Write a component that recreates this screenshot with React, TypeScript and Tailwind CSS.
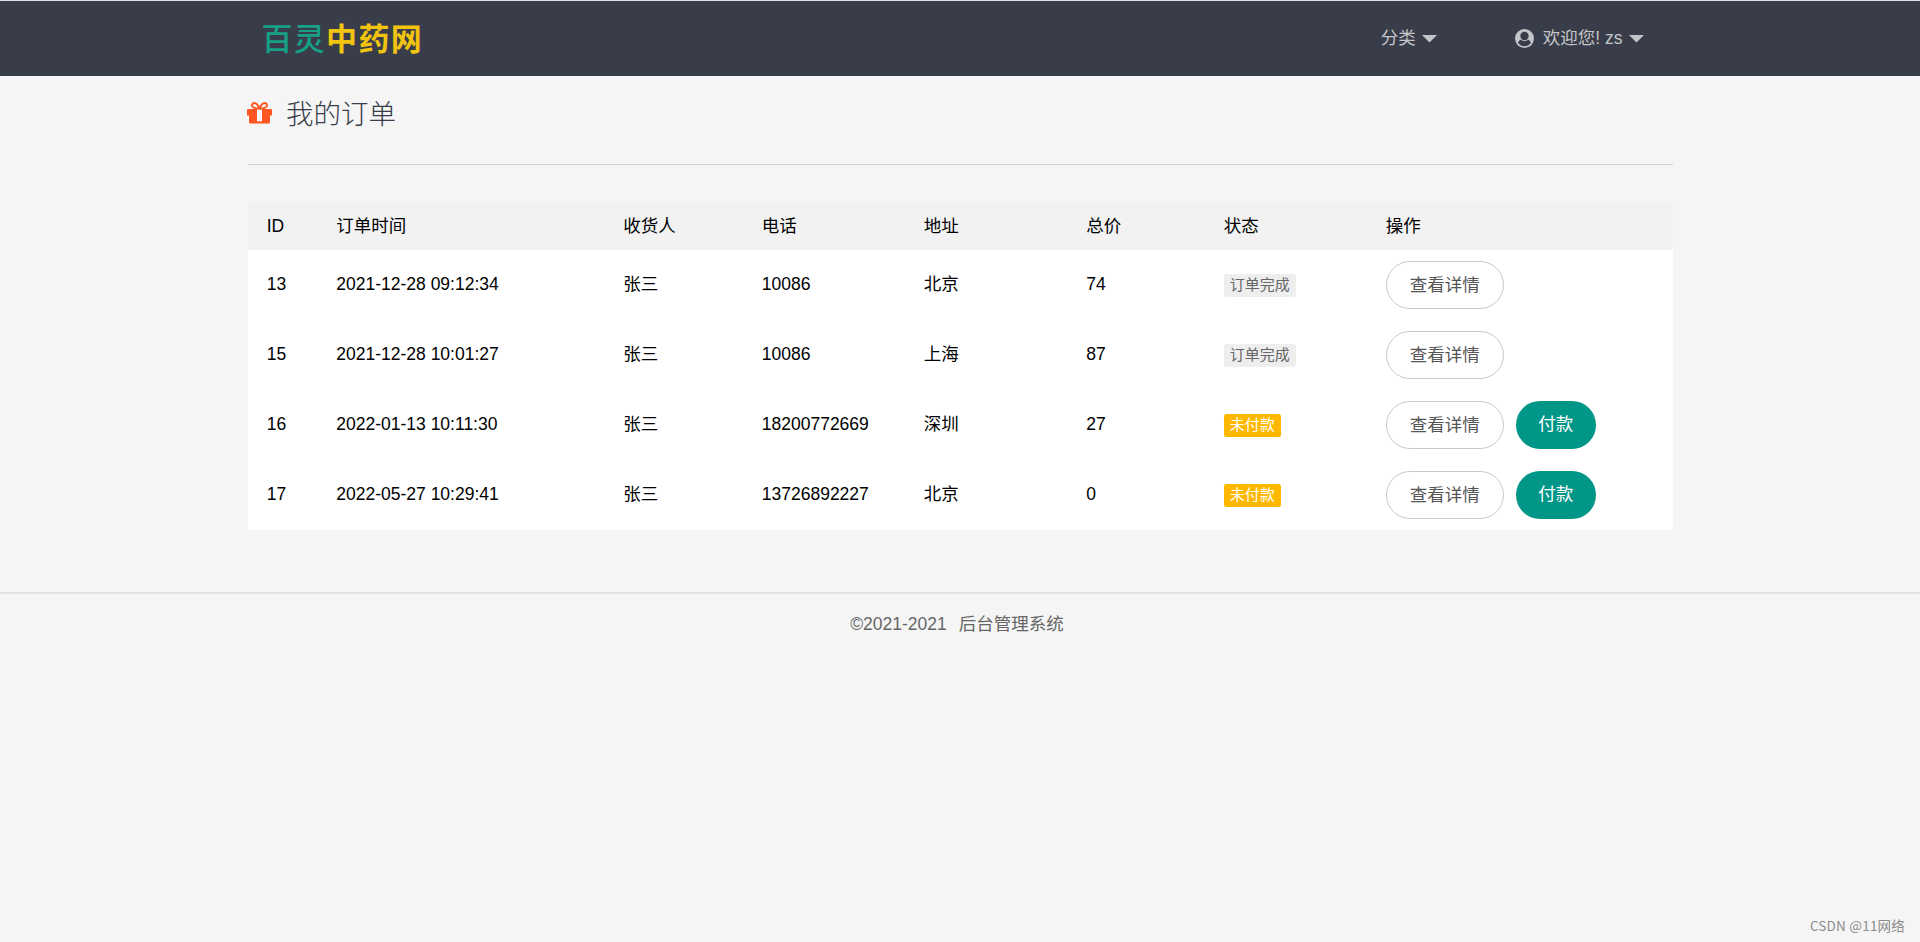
import { FC } from 'react';

type Order = {
    id: number;
    time: string;
    name: string;
    phone: string;
    address: string;
    total: number;
    paid: boolean;
};

const orders: Order[] = [
    { id: 13, time: '2021-12-28 09:12:34', name: '张三', phone: '10086', address: '北京', total: 74, paid: true },
    { id: 15, time: '2021-12-28 10:01:27', name: '张三', phone: '10086', address: '上海', total: 87, paid: true },
    { id: 16, time: '2022-01-13 10:11:30', name: '张三', phone: '18200772669', address: '深圳', total: 27, paid: false },
    { id: 17, time: '2022-05-27 10:29:41', name: '张三', phone: '13726892227', address: '北京', total: 0, paid: false },
];

const columns = ['ID', '订单时间', '收货人', '电话', '地址', '总价', '状态', '操作'];

const rowGrid =
    'grid grid-cols-[69.5px_287px_138.5px_162px_162.5px_137.5px_162px_1fr] pl-[18.75px]';

const Caret: FC = () => (
    <svg className="w-[15px] h-[8px] ml-[6px] mt-[3px]" viewBox="0 0 15 8" fill="currentColor">
        <path d="M0 0h15L7.5 7.5z" />
    </svg>
);

const UserIcon: FC = () => (
    <svg className="w-[19px] h-[19px] mr-[9px] mt-px" viewBox="0 0 19 19">
        <circle cx="9.5" cy="9.5" r="9.5" fill="currentColor" />
        <circle cx="9.5" cy="7" r="4.2" fill="#393d49" />
        <path d="M3 13.800C3.800 12 5 11 6 10.600c1.800 2.200 5.200 2.200 7 0 1 .4 2.200 1.400 3 3.200C14.300 16.200 12 17.300 9.500 17.300S4.700 16.200 3 13.800z" fill="#393d49" />
    </svg>
);

const GiftIcon: FC = () => (
    <svg className="w-[25px] h-[22px]" viewBox="0 0 25 22">
        <path d="M1 7h23q1 0 1 1v5q0 .6-.6.6H23V20q0 1.500-1.500 1.500h-18Q2 21.500 2 20v-6.400H.6Q0 13.600 0 13V8q0-1 1-1z" fill="#ff5722" />
        <path d="M10 7.300h5v12h-5z" fill="#f9f9f9" />
        <path
            d="M12.500 6.800C11 3 9.200 1 7.300 1 5.700 1 4.800 2.200 5 3.700c.3 1.800 2 2.900 7.500 3.100zM12.500 6.800C14 3 15.800 1 17.700 1c1.600 0 2.500 1.200 2.300 2.700-.3 1.800-2 2.900-7.500 3.100z"
            fill="none"
            stroke="#ff5722"
            strokeWidth="1.900"
        />
    </svg>
);

const Header: FC = () => (
    <header className="h-[76px] border-t border-[#dfe1e2] bg-[#393d49] text-[#c4c5c8]">
        <div className="w-[1425px] mx-auto h-full flex items-center">
            <div className="pl-[14px] text-[31px] leading-none tracking-[1.300px] pt-px">
                <span className="text-[#16a085] font-medium">百灵</span>
                <span className="text-[#f1c40f] font-bold">中药网</span>
            </div>
            <nav className="ml-auto mr-[29px] -mt-[2px] flex items-center">
                <a className="flex items-center mr-[78px]">
                    分类
                    <Caret />
                </a>
                <a className="flex items-center whitespace-pre">
                    <UserIcon />
                    欢迎您! zs
                    <Caret />
                </a>
            </nav>
        </div>
    </header>
);

const StatusBadge: FC<{ paid: boolean }> = ({ paid }) =>
    paid ? (
        <span className="inline-block h-[23px] px-[6px] rounded-[2.500px] bg-[#eee] text-[#666] text-[15px] leading-[21px]">
            订单完成
        </span>
    ) : (
        <span className="inline-block h-[23px] px-[6px] rounded-[2.500px] bg-[#ffb800] text-white text-[15px] leading-[21px]">
            未付款
        </span>
    );

const OrderRow: FC<{ order: Order }> = ({ order }) => (
    <div className={`${rowGrid} h-[70px] bg-white leading-[69px]`}>
        <span>{order.id}</span>
        <span>{order.time}</span>
        <span>{order.name}</span>
        <span>{order.phone}</span>
        <span>{order.address}</span>
        <span>{order.total}</span>
        <div className="pt-6 flex items-start">
            <StatusBadge paid={order.paid} />
        </div>
        <div className="pt-[11px] flex items-start gap-3">
            <button className="w-[118px] h-12 rounded-[24px] border border-[#c9c9c9] bg-white text-[#555] leading-[45px]">
                查看详情
            </button>
            {!order.paid && (
                <button className="w-20 h-12 pb-[2px] rounded-[24px] bg-[#009688] text-white leading-[45px]">付款</button>
            )}
        </div>
    </div>
);

export default function App() {
    return (
        <div className="min-h-screen flex flex-col bg-[#f5f5f5] text-black text-[17.5px] leading-6 font-['Liberation_Sans','Noto_Sans_CJK_SC',sans-serif]">
            <Header />
            <main className="w-[1425px] ml-[248px]">
                <div className="h-[89px] border-b border-[#d2d2d2] flex items-start pt-[18px]">
                    <div className="pt-[8px] -ml-px">
                        <GiftIcon />
                    </div>
                    <h1 className="ml-[14px] pt-[2px] text-[27.5px] leading-[38px] font-light text-[#393d49]">我的订单</h1>
                </div>
                <div className="mt-[37px]">
                    <div className={`${rowGrid} h-12 bg-[#f2f2f2] leading-[49px]`}>
                        {columns.map((c) => (
                            <span key={c}>{c}</span>
                        ))}
                    </div>
                    {orders.map((o) => (
                        <OrderRow key={o.id} order={o} />
                    ))}
                </div>
            </main>
            <footer className="mt-[62px] pt-[18px] border-t-2 border-[#e2e2e2] flex justify-center gap-3 pr-[6px] text-[#666]">
                <span>©2021-2021</span>
                <span>后台管理系统</span>
            </footer>
            <div className="mt-auto pr-[15px] pb-[6px] text-right text-[13.500px] leading-[22px] tracking-[0.200px] text-[#8c8c8c] font-['Noto_Sans_CJK_SC',sans-serif]">
                CSDN @11网络
            </div>
        </div>
    );
}
